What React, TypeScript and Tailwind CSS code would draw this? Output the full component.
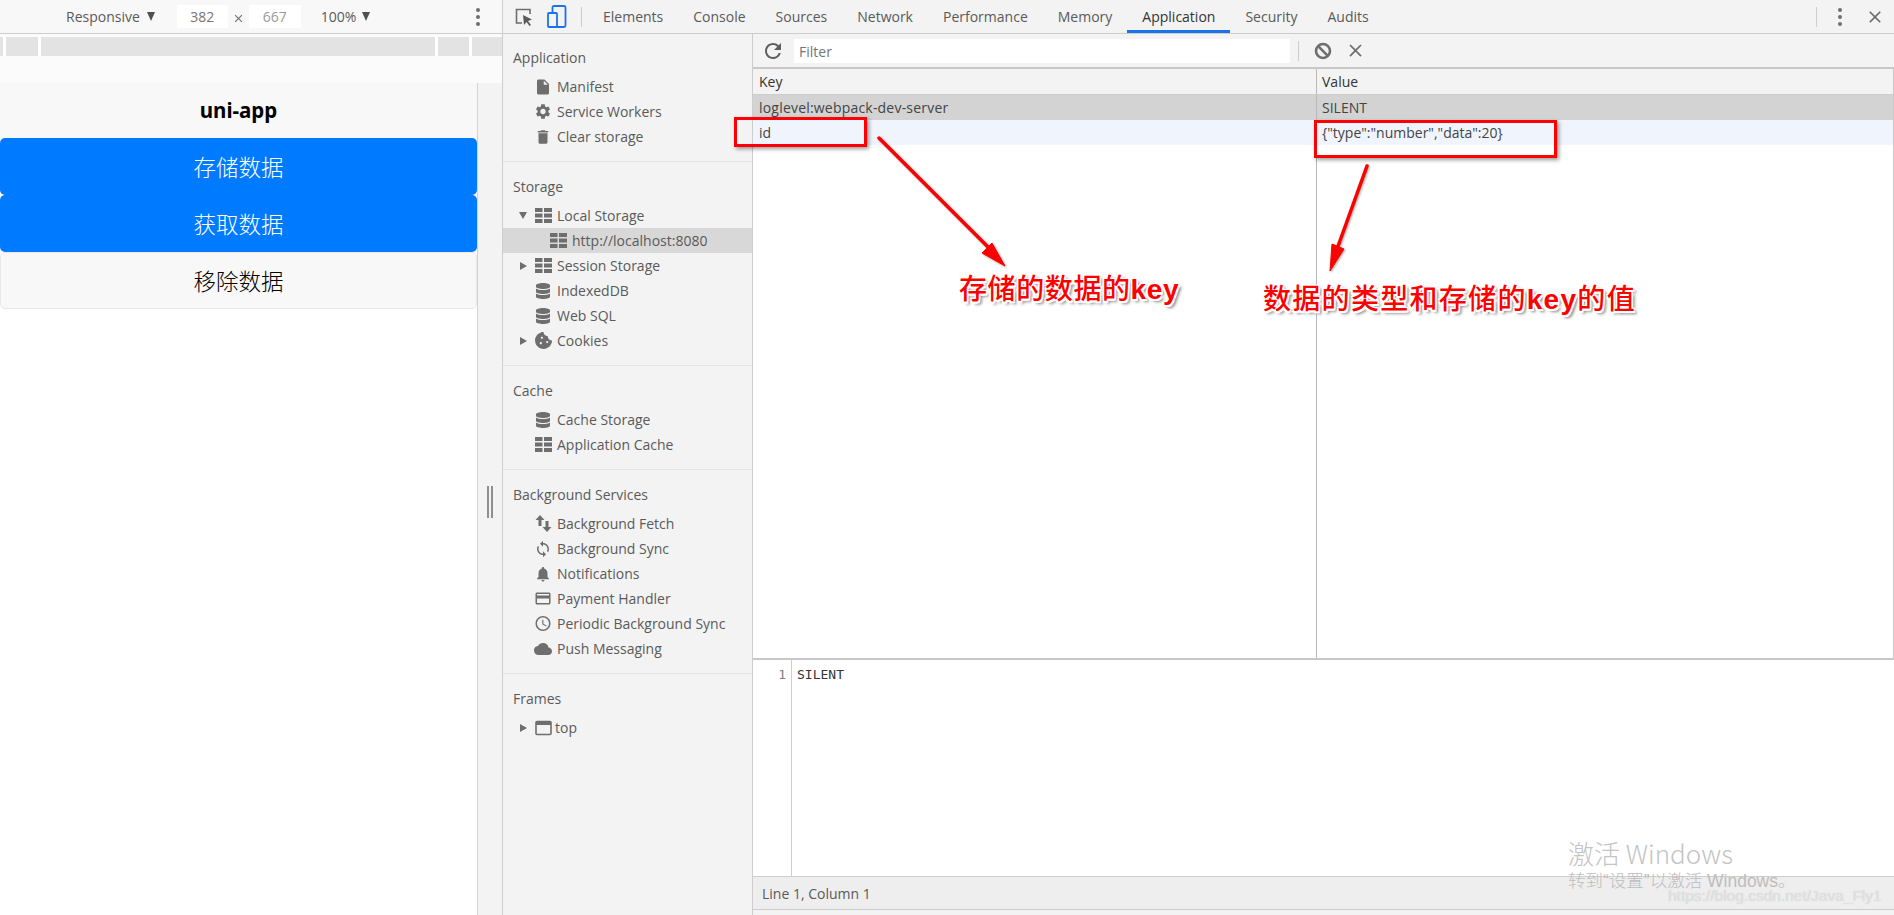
import React from 'react';
import { MdInsertDriveFile, MdSettings, MdDelete, MdNotifications, MdCreditCard, MdAccessTime, MdCloud, MdSync, MdClose, MdRefresh } from 'react-icons/md';
import { FaDatabase, FaCookieBite } from 'react-icons/fa';

const uiFont = "font-['Open_Sans','Noto_Sans_CJK_SC',sans-serif]";

const TableIcon = () => (
  <svg width="17" height="15" viewBox="0 0 17 15" fill="currentColor">
    <rect x="0" y="0" width="7.5" height="4" />
    <rect x="9" y="0" width="8" height="4" />
    <rect x="0" y="5.5" width="7.5" height="4" />
    <rect x="9" y="5.5" width="8" height="4" />
    <rect x="0" y="11" width="7.5" height="4" />
    <rect x="9" y="11" width="8" height="4" />
  </svg>
);

const FetchIcon = () => (
  <svg width="17" height="17" viewBox="0 0 17 17" fill="currentColor">
    <path d="M5 0 L9.5 5 H6.5 V11 H3.5 V5 H0.5 Z" />
    <path d="M12 17 L7.5 12 H10.5 V6 H13.5 V12 H16.5 Z" />
  </svg>
);

const FrameIcon = () => (
  <svg width="17" height="16" viewBox="0 0 17 16" fill="none" stroke="currentColor">
    <rect x="1" y="1.5" width="15" height="13" rx="1" strokeWidth="1.6" />
    <path d="M1 3.5 H16" strokeWidth="3" />
  </svg>
);

const BlockIcon = () => (
  <svg width="18" height="18" viewBox="0 0 18 18" fill="none" stroke="#6e6e6e" strokeWidth="2.6">
    <circle cx="9" cy="9" r="7" />
    <path d="M4.2 4.2 L13.8 13.8" />
  </svg>
);

const KebabIcon = () => (
  <div className="flex flex-col gap-[3px]">
    <div className="w-[4px] h-[4px] rounded-full bg-[#6e6e6e]" />
    <div className="w-[4px] h-[4px] rounded-full bg-[#6e6e6e]" />
    <div className="w-[4px] h-[4px] rounded-full bg-[#6e6e6e]" />
  </div>
);

const Arrow = ({ open }: { open?: boolean }) => (
  <span className="w-[15px] flex items-center shrink-0">
    {open ? (
      <span className="w-0 h-0 border-l-[4.5px] border-r-[4.5px] border-t-[7px] border-l-transparent border-r-transparent border-t-[#6e6e6e]" />
    ) : (
      <span className="ml-[1px] w-0 h-0 border-t-[4.5px] border-b-[4.5px] border-l-[7px] border-t-transparent border-b-transparent border-l-[#6e6e6e]" />
    )}
  </span>
);

interface RowProps {
  icon: React.ReactNode;
  label: string;
  arrow?: 'open' | 'closed';
  active?: boolean;
  indent?: boolean;
}

const Row = ({ icon, label, arrow, active, indent }: RowProps) => (
  <div className={`h-[25px] flex items-center pl-[16px] ${active ? 'bg-[#d8d8d8]' : ''}`}>
    {arrow ? <Arrow open={arrow === 'open'} /> : <span className="w-[15px] shrink-0" />}
    {indent && <span className="w-[15px] shrink-0" />}
    <span className="w-[18px] flex justify-center items-center shrink-0 text-[#6e6e6e]">{icon}</span>
    <span className="ml-[5px] whitespace-nowrap">{label}</span>
  </div>
);

const Section = ({ title, children, last, first }: { title: string; children: React.ReactNode; last?: boolean; first?: boolean }) => (
  <div className={`${first ? 'pt-[11px]' : 'pt-[12px]'} pb-[12px] ${last ? '' : 'border-b border-[#e4e4e4]'}`}>
    <div className="h-[25px] flex items-center pl-[10px] mb-[4px]">{title}</div>
    {children}
  </div>
);

const tabs = ['Elements', 'Console', 'Sources', 'Network', 'Performance', 'Memory', 'Application', 'Security', 'Audits'];

const noteShadow =
  '[text-shadow:-1.5px_-1.5px_0_#fff,1.5px_-1.5px_0_#fff,-1.5px_1.5px_0_#fff,1.5px_1.5px_0_#fff,0_-1.5px_0_#fff,0_1.5px_0_#fff,3px_3px_3px_rgba(0,0,0,0.5)]';

export default function App() {
  return (
    <div className={`relative w-[1894px] h-[915px] overflow-hidden flex bg-white text-[14px] text-[#5a5a5a] ${uiFont}`}>
      {/* 왼쪽: device preview */}
      <div className="w-[502px] shrink-0 flex flex-col">
        <div className="h-[34px] shrink-0 flex items-center bg-[#f8f8f8] border-b border-[#cdcdcd] relative">
          <span className="ml-[66px] text-[#5a5a5a]">Responsive</span>
          <span className="ml-[7px] w-0 h-0 border-l-[4.5px] border-r-[4.5px] border-t-[9px] border-l-transparent border-r-transparent border-t-[#505050]" />
          <div className="ml-[22px] w-[51px] h-[23px] bg-white flex items-center justify-center text-[#757575]">382</div>
          <span className="w-[21px] flex justify-center pt-[4px] text-[#6e6e6e]"><MdClose size={13} /></span>
          <div className="w-[52px] h-[23px] bg-white flex items-center justify-center text-[#9a9a9a]">667</div>
          <span className="ml-[20px] text-[#5a5a5a]">100%</span>
          <span className="ml-[6px] w-0 h-0 border-l-[4.5px] border-r-[4.5px] border-t-[9px] border-l-transparent border-r-transparent border-t-[#505050]" />
          <div className="ml-[106px]"><KebabIcon /></div>
        </div>
        <div className="h-[49px] shrink-0 bg-[#fbfbfb] pt-[3px]">
          <div className="h-[19px] flex bg-[#e3e3e3]">
            <div className="w-[3px]" />
            <div className="w-[3px] bg-white" />
            <div className="w-[32px]" />
            <div className="w-[3px] bg-white" />
            <div className="w-[394px]" />
            <div className="w-[3px] bg-white" />
            <div className="w-[31px]" />
            <div className="w-[3px] bg-white" />
          </div>
        </div>
        <div className="flex-1 flex min-h-0">
          <div className="w-[478px] shrink-0 border-r border-[#d4d4d4] bg-white">
            <div className="h-[55px] flex items-center justify-center bg-[#f8f8f8] text-black font-bold text-[20.5px] font-['Noto_Sans',sans-serif]">uni-app</div>
            <div className="h-[57px] flex items-center justify-center bg-[#007aff] rounded-[5px] text-white text-[22.5px] font-light font-['Noto_Sans_CJK_SC',sans-serif]">存储数据</div>
            <div className="h-[57px] flex items-center justify-center bg-[#007aff] rounded-[5px] text-white text-[22.5px] font-light font-['Noto_Sans_CJK_SC',sans-serif]">获取数据</div>
            <div className="h-[57px] flex items-center justify-center bg-[#f8f8f8] border border-[#e8e8e8] rounded-[5px] text-black text-[22.5px] font-light font-['Noto_Sans_CJK_SC',sans-serif]">移除数据</div>
          </div>
          <div className="flex-1 bg-[#f3f3f3] flex justify-center items-start pt-[403px] gap-[2px]">
            <div className="w-[2px] h-[32px] bg-[#8f8f8f]" />
            <div className="w-[2px] h-[32px] bg-[#8f8f8f]" />
          </div>
        </div>
      </div>

      {/* 오른쪽: devtools */}
      <div className="flex-1 flex flex-col min-w-0 border-l border-[#cdcdcd] bg-[#f3f3f3]">
        <div className="h-[34px] shrink-0 flex items-center border-b border-[#cdcdcd]">
          <svg className="ml-[11px]" width="20" height="20" viewBox="0 0 20 20" fill="none">
            <path d="M8 16 H2.5 V2.5 H16 V7" stroke="#6e6e6e" strokeWidth="1.6" />
            <path d="M9 8 L18 12.5 L14 14 L17 18 L15.5 19 L12.5 15 L10 18 Z" fill="#5a5a5a" />
          </svg>
          <svg className="ml-[13px]" width="20" height="24" viewBox="0 0 20 24" fill="none">
            <rect x="5.5" y="1" width="13" height="21" rx="1.5" stroke="#1a73e8" strokeWidth="1.8" />
            <rect x="1" y="8" width="9" height="14" rx="1" fill="#f3f3f3" stroke="#1a73e8" strokeWidth="1.8" />
          </svg>
          <div className="ml-[14px] w-[1px] h-[20px] bg-[#cdcdcd]" />
          <div className="ml-[6px] flex h-full">
            {tabs.map((t) => (
              <div
                key={t}
                className={`px-[15px] flex items-center border-b-[3px] pt-[2px] ${t === 'Application' ? 'border-[#1a73e8] text-[#333333]' : 'border-transparent'}`}
              >
                {t}
              </div>
            ))}
          </div>
          <div className="ml-auto w-[1px] h-[20px] bg-[#cdcdcd]" />
          <div className="ml-[21px]"><KebabIcon /></div>
          <span className="ml-[23px] mr-[9px] text-[#6e6e6e]"><MdClose size={20} /></span>
        </div>

        <div className="flex-1 flex min-h-0">
          {/* 사이드바 */}
          <div className="w-[250px] shrink-0 border-r border-[#cdcdcd]">
            <Section title="Application" first>
              <Row icon={<MdInsertDriveFile size={22} />} label="Manifest" />
              <Row icon={<MdSettings size={21} />} label="Service Workers" />
              <Row icon={<MdDelete size={24} />} label="Clear storage" />
            </Section>
            <Section title="Storage">
              <Row icon={<TableIcon />} label="Local Storage" arrow="open" />
              <Row icon={<TableIcon />} label="http://localhost:8080" active indent />
              <Row icon={<TableIcon />} label="Session Storage" arrow="closed" />
              <Row icon={<FaDatabase size={16} />} label="IndexedDB" />
              <Row icon={<FaDatabase size={16} />} label="Web SQL" />
              <Row icon={<FaCookieBite size={17} />} label="Cookies" arrow="closed" />
            </Section>
            <Section title="Cache">
              <Row icon={<FaDatabase size={16} />} label="Cache Storage" />
              <Row icon={<TableIcon />} label="Application Cache" />
            </Section>
            <Section title="Background Services">
              <Row icon={<FetchIcon />} label="Background Fetch" />
              <Row icon={<MdSync size={20} />} label="Background Sync" />
              <Row icon={<MdNotifications size={22} />} label="Notifications" />
              <Row icon={<MdCreditCard size={21} />} label="Payment Handler" />
              <Row icon={<MdAccessTime size={21} />} label="Periodic Background Sync" />
              <Row icon={<MdCloud size={22} />} label="Push Messaging" />
            </Section>
            <Section title="Frames" last>
              <div className="h-[25px] flex items-center pl-[16px]">
                <Arrow />
                <span className="w-[18px] flex justify-center text-[#6e6e6e]"><FrameIcon /></span>
                <span className="ml-[3px]">top</span>
              </div>
            </Section>
          </div>

          {/* 메인 */}
          <div className="flex-1 min-w-0 flex flex-col">
            <div className="h-[33px] shrink-0 flex items-center">
              <span className="ml-[8px] text-[#5f5f5f]"><MdRefresh size={24} /></span>
              <div className="ml-[9px] w-[496px] h-[24px] bg-white flex items-center pl-[5px] pt-[1px] text-[#757575]">Filter</div>
              <div className="ml-[8px] w-[1px] h-[20px] bg-[#cdcdcd]" />
              <span className="ml-[15px]"><BlockIcon /></span>
              <span className="ml-[13px] text-[#6e6e6e]"><MdClose size={21} /></span>
            </div>
            <div className="h-[593px] shrink-0 flex flex-col bg-white border-t-2 border-b-2 border-r border-[#c8c8c8]">
              <div className="h-[26px] shrink-0 flex bg-[#f3f3f3] border-b border-[#cdcdcd] text-[#333333]">
                <div className="w-[563px] shrink-0 pl-[6px] flex items-center">Key</div>
                <div className="flex-1 pl-[5px] flex items-center border-l border-[#b8b8b8]">Value</div>
              </div>
              <div className="h-[25px] shrink-0 flex bg-[#d3d3d3] text-[#444444]">
                <div className="w-[563px] shrink-0 pl-[6px] flex items-center tracking-[0.2px]">loglevel:webpack-dev-server</div>
                <div className="flex-1 pl-[5px] flex items-center border-l border-[#b8b8b8]">SILENT</div>
              </div>
              <div className="h-[25px] shrink-0 flex bg-[#f0f5fd] text-[#444444]">
                <div className="w-[563px] shrink-0 pl-[6px] flex items-center">id</div>
                <div className="flex-1 pl-[5px] flex items-center border-l border-[#b8b8b8]">{'{"type":"number","data":20}'}</div>
              </div>
              <div className="flex-1 flex">
                <div className="w-[563px] shrink-0" />
                <div className="flex-1 border-l border-[#b8b8b8]" />
              </div>
            </div>
            <div className="flex-1 flex bg-white min-h-0">
              <div className="w-[39px] shrink-0 border-r border-[#cdcdcd] text-right pr-[5px] pt-[7px] text-[13px] leading-[16px] text-[#808080] font-['DejaVu_Sans_Mono',monospace]">1</div>
              <div className="pl-[5px] pt-[7px] text-[13px] leading-[16px] text-[#333333] font-['DejaVu_Sans_Mono',monospace]">SILENT</div>
            </div>
            <div className="h-[34px] shrink-0 flex items-center pl-[9px] bg-[#eeeeee] border-t border-b border-[#cdcdcd]">Line 1, Column 1</div>
            <div className="h-[5px] shrink-0" />
          </div>
        </div>
      </div>

      {/* 빨간 주석 */}
      <div className="absolute left-[734px] top-[117px] w-[133px] h-[30px] border-[3px] border-[#ff0000] shadow-[2px_2px_4px_rgba(0,0,0,0.4)]" />
      <div className="absolute left-[1314px] top-[120px] w-[243px] h-[38px] border-[3px] border-[#ff0000] shadow-[2px_2px_4px_rgba(0,0,0,0.4)]" />
      <svg className="absolute left-0 top-0 pointer-events-none drop-shadow-[1px_1px_1px_rgba(0,0,0,0.35)]" width="1894" height="915" viewBox="0 0 1894 915">
        <path d="M879 138 L989 248" stroke="#ff0000" strokeWidth="3.5" strokeLinecap="round" />
        <path d="M1005 266 L982 253 L992 243 Z" fill="#ff0000" stroke="#ff0000" />
        <path d="M1367 166 L1337 249" stroke="#ff0000" strokeWidth="3.5" strokeLinecap="round" />
        <path d="M1330 271 L1332 244 L1344 249 Z" fill="#ff0000" stroke="#ff0000" />
      </svg>
      <div className={`absolute left-[959px] top-[267px] text-[#ff0000] text-[28px] leading-[40px] tracking-[0.6px] whitespace-nowrap font-medium font-['Noto_Sans_CJK_SC',sans-serif] ${noteShadow}`}>
        存储的数据的<span className="font-bold font-['Liberation_Sans',sans-serif]">key</span>
      </div>
      <div className={`absolute left-[1263px] top-[277px] text-[#ff0000] text-[28px] leading-[40px] tracking-[1.3px] whitespace-nowrap font-medium font-['Noto_Sans_CJK_SC',sans-serif] ${noteShadow}`}>
        数据的类型和存储的<span className="font-bold font-['Liberation_Sans',sans-serif]">key</span>的值
      </div>

      {/* 水印 */}
      <div className="absolute left-[1568px] top-[836px] text-[#c4c4c4] text-[26px] leading-[34px] whitespace-nowrap font-['Noto_Sans_CJK_SC',sans-serif] font-light">激活 Windows</div>
      <div className="absolute left-[1568px] top-[869px] text-[#bdbdbd] text-[17.5px] leading-[24px] whitespace-nowrap font-['Liberation_Sans','Noto_Sans_CJK_SC',sans-serif] font-light">转到“设置”以激活 Windows。</div>
      <div className="absolute left-[1668px] top-[885px] text-[#e2e2e2] text-[15.5px] leading-[22px] whitespace-nowrap font-['Liberation_Sans',sans-serif] [text-shadow:0_0_1px_#c8c8c8]">https://blog.csdn.net/Java_Fly1</div>
    </div>
  );
}
